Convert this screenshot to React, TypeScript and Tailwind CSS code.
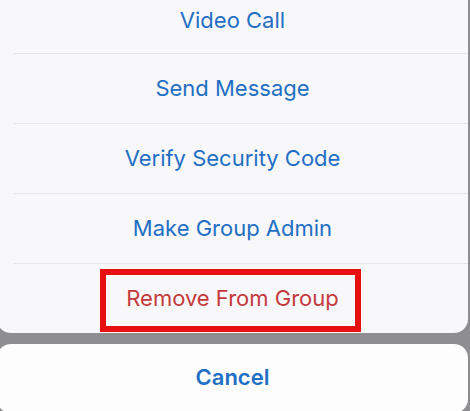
import React from 'react';

const font = { fontFamily: 'Inter, "Liberation Sans", sans-serif' };

const actions: { label: string; danger?: boolean }[] = [
  { label: 'Video Call' },
  { label: 'Send Message' },
  { label: 'Verify Security Code' },
  { label: 'Make Group Admin' },
  { label: 'Remove From Group', danger: true },
];

const App: React.FC = () => {
  return (
    <div className="h-[411px] w-[470px] overflow-hidden bg-[#8e8e90]" style={font}>
      {/* Action list */}
      <div className="-ml-[3px] -mt-[17px] w-[471px] overflow-hidden rounded-[14px] bg-[#f8f8fa]">
        {actions.map(({ label, danger }, i) => (
          <div
            key={label}
            className={`relative flex h-[70px] items-center justify-center ${
              i > 0 ? 'border-t border-[#e6e6ea]' : ''
            }`}
          >
            {i > 0 && <div className="absolute left-0 top-[-1px] h-px w-[17px] bg-[#f8f8fa]" />}
            <span
              className={`text-[22px] ${i === 0 ? 'pt-[5px]' : ''} ${danger ? 'text-[#c43a3c]' : 'text-[#1f6fc4]'}`}
            >
              {label}
            </span>
            {danger && (
              <div className="absolute left-[103px] top-[5px] h-[63px] w-[261px] border-[6px] border-[#e5100f]" />
            )}
          </div>
        ))}
      </div>

      {/* Cancel */}
      <div className="-ml-[3px] mt-[11px] flex h-[69px] w-[471px] items-center justify-center rounded-[14px] bg-[#fdfdfd]">
        <span className="pb-[2px] text-[22px] font-semibold text-[#1f6fc4]">Cancel</span>
      </div>
    </div>
  );
};

export default App;
